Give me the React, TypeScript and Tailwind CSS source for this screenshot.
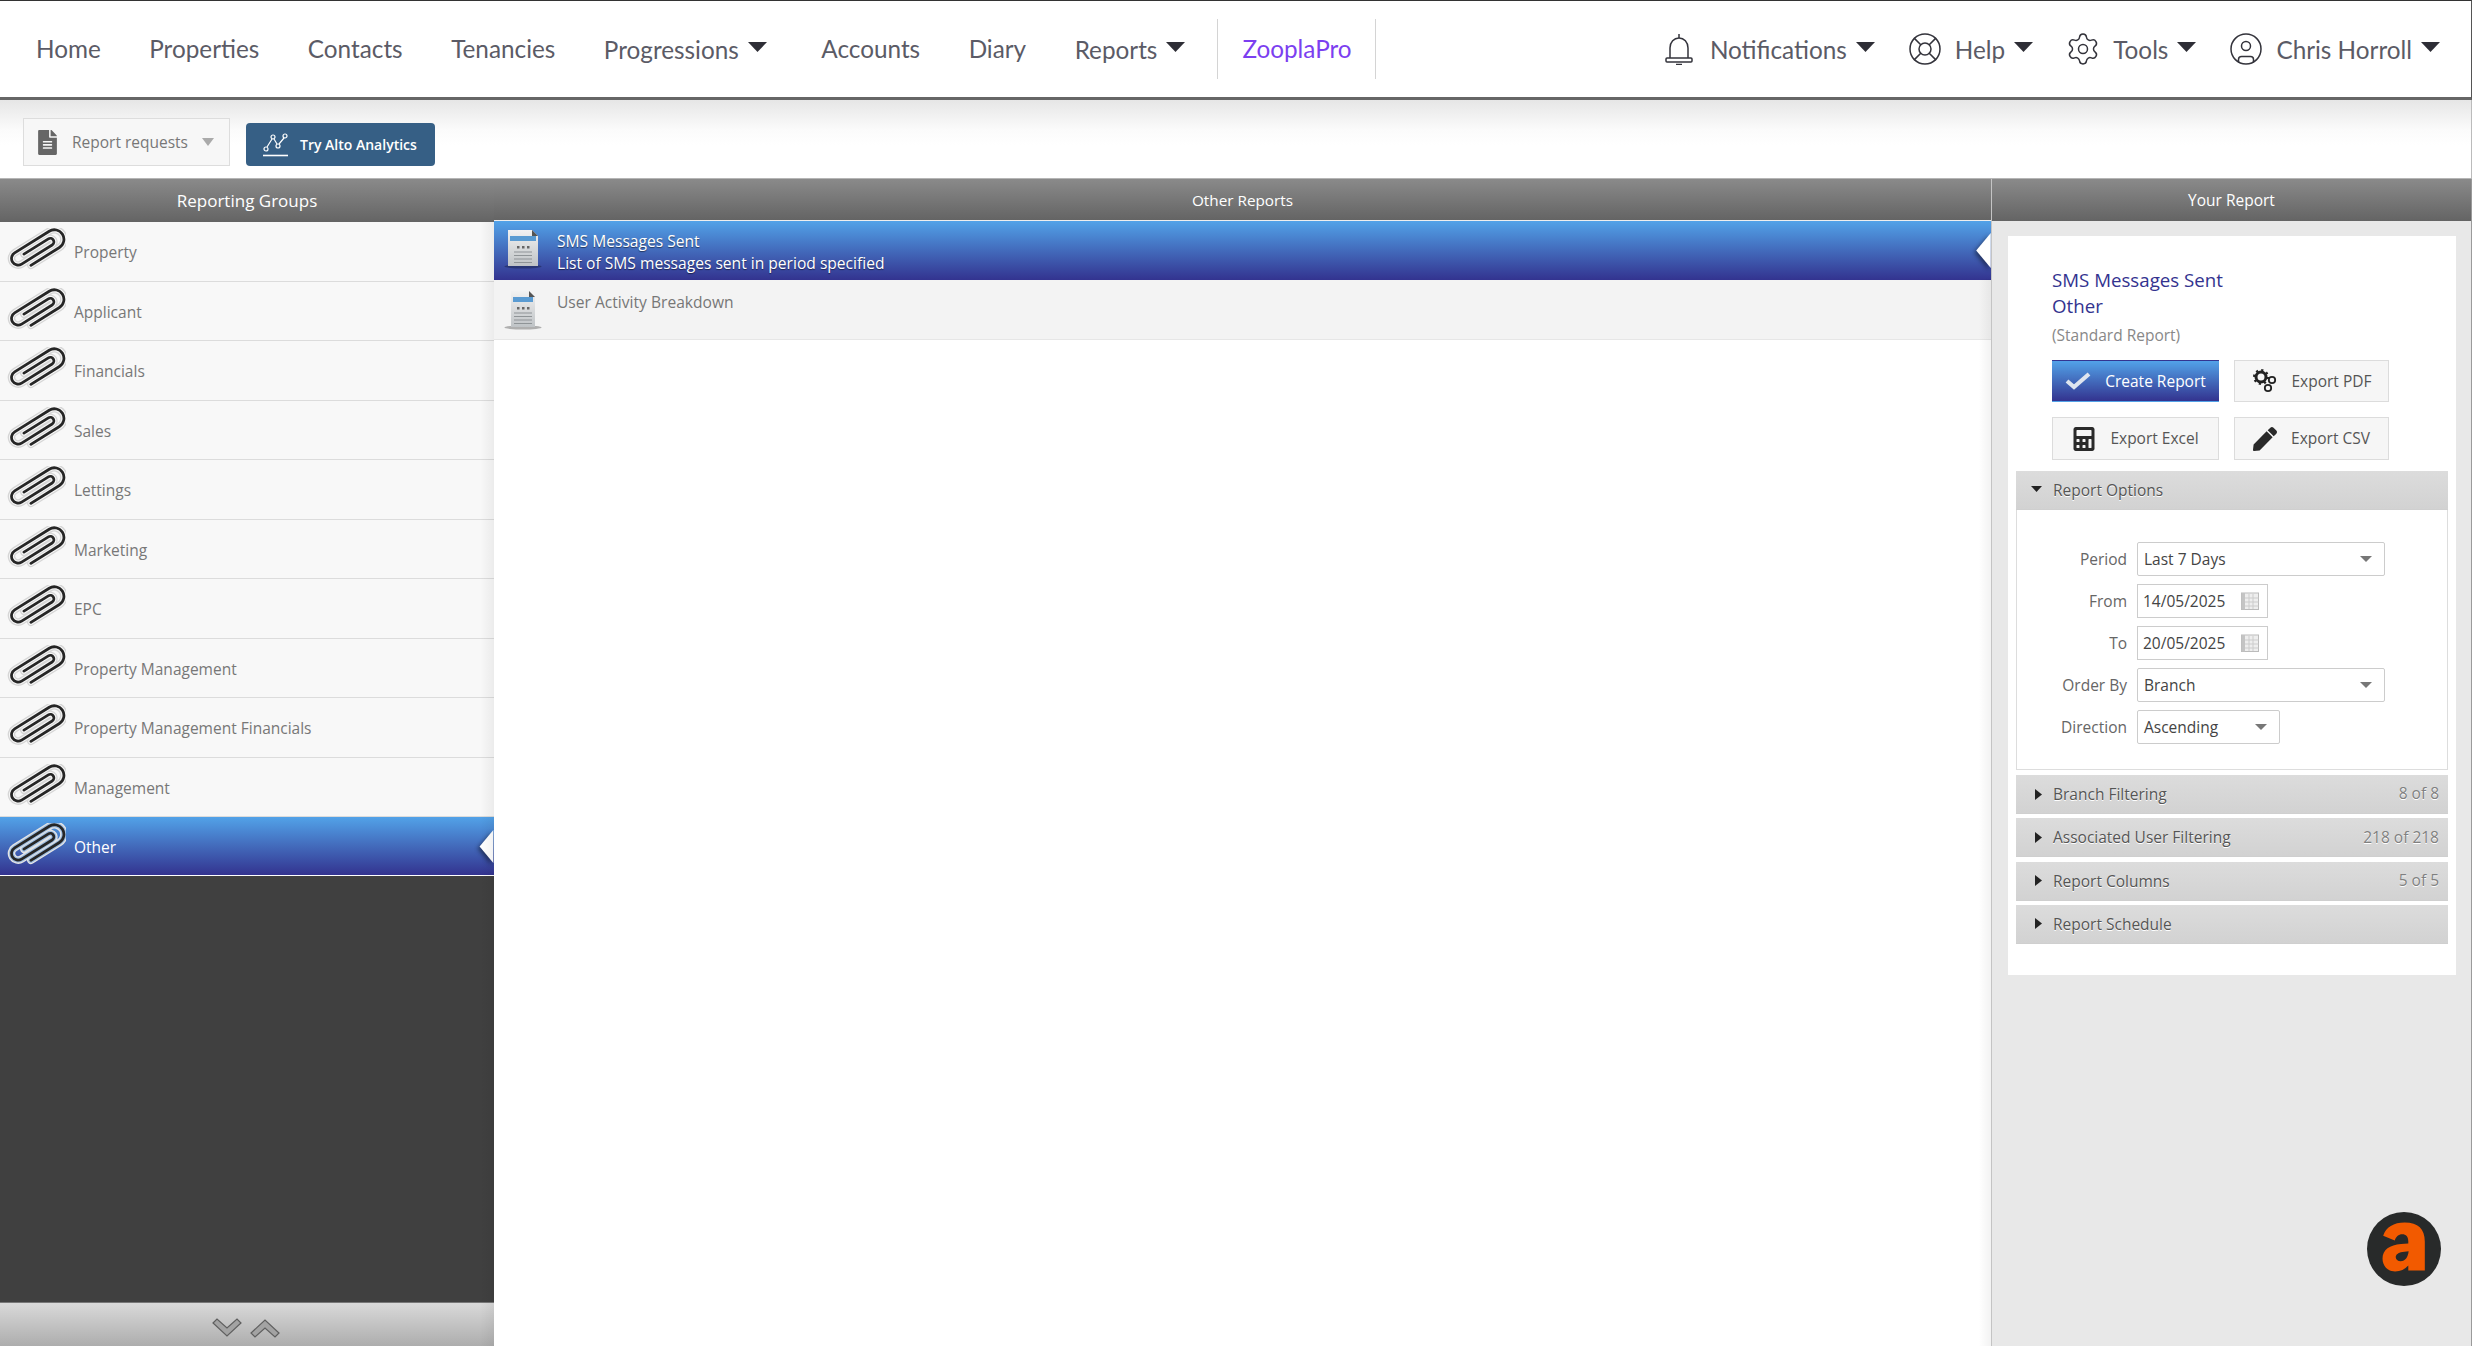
import React from "react";
import { LifeBuoy, Settings, CircleUser } from "lucide-react";
import { FaFileAlt, FaCalculator, FaPen } from "react-icons/fa";

const Caret = () => (
  <svg width="19" height="10" viewBox="0 0 19 10" className="ml-[9px] mt-[-3px] shrink-0">
    <path d="M0 0H19L9.5 10Z" fill="#2e2e36" />
  </svg>
);

const NavItem = ({ label, caret, className = "" }: { label: string; caret?: boolean; className?: string }) => (
  <div className={`flex items-center text-[24.3px] leading-none text-[#5b5b66] ${className}`}>
    <span className={caret ? "mt-[2px]" : ""}>{label}</span>
    {caret && <Caret />}
  </div>
);

const Bell = () => (
  <svg width="30" height="32" viewBox="0 0 30 32" fill="none" stroke="#33333b" strokeWidth="1.5" className="shrink-0">
    <path d="M15 1V5" />
    <path d="M6 25V15C6 9 10 5 15 5C20 5 24 9 24 15V25" />
    <rect x="2" y="25" width="26" height="4" rx="1" />
    <path d="M12 31.5H18" />
  </svg>
);

const Paperclip = ({ active }: { active?: boolean }) => {
  const d = "M14 18H42A8 8 0 0 0 42 2H8A5.5 5.5 0 0 0 8 13H38A3 3 0 0 0 38 7H14";
  return (
    <svg width="60" height="46" viewBox="-1 -9 50 38.3" className="shrink-0">
      <g transform="rotate(-32 24 10)" fill="none" strokeLinecap="round">
        <path d={d} stroke={active ? "#e4e4e4" : "#d6d6d6"} strokeWidth="6.4" />
        <path d={d} stroke={active ? "#9dbce0" : "#f6f6f6"} strokeWidth="4.2" />
        <path d={d} stroke="#262626" strokeWidth="2.3" />
      </g>
    </svg>
  );
};

const ReportIcon = ({ w = 30, id }: { w?: number; id: string }) => (
  <svg width="38" height="40" viewBox="0 0 38 40" className="shrink-0">
    <defs>
      <linearGradient id={id} x1="0" y1="0" x2="0" y2="1">
        <stop offset="0" stopColor="#f2f2f2" />
        <stop offset="1" stopColor="#bfc3c6" />
      </linearGradient>
    </defs>
    <ellipse cx="19" cy="37.5" rx="18.5" ry="2" fill="#000" fillOpacity="0.28" />
    <path d={`M${19 - w / 2} 1H${19 + w / 2 - 6}L${19 + w / 2} 7V37H${19 - w / 2}Z`} fill={`url(#${id})`} />
    <path d={`M${19 + w / 2 - 6} 1L${19 + w / 2} 7H${19 + w / 2 - 6}Z`} fill="#555" />
    <rect x={19 - w / 2 + 2} y="7" width={w - 4} height="5" fill="#5a9bd2" />
    <path d="M13 17h2.5v2.5H13zM18 17h2.5v2.5H18zM23 17h2.5v2.5H23z" fill="#666" />
    <path d="M10 23H28M10 26.5H28M10 30H28M10 33.5H28" stroke="#8f9497" strokeWidth="1.2" />
  </svg>
);

const Notch = ({ top, h }: { top: string; h: string }) => (
  <svg width="16" height="36" viewBox="0 0 16 36" className={`absolute right-0 ${top} ${h} drop-shadow-[-2px_2px_2px_rgba(0,0,0,0.45)]`}>
    <path d="M16 0V36L1 18Z" fill="#fff" />
  </svg>
);

const groups = [
  "Property",
  "Applicant",
  "Financials",
  "Sales",
  "Lettings",
  "Marketing",
  "EPC",
  "Property Management",
  "Property Management Financials",
  "Management",
];

const ColHeader = ({ children, className = "" }: { children: string; className?: string }) => (
  <div className={`flex items-center justify-center bg-[linear-gradient(#8a8a8a,#646464)] text-white ${className}`}>
    {children}
  </div>
);

const ExportButton = ({ icon, label, w, primary, nudge }: { icon: React.ReactNode; label: string; w: string; primary?: boolean; nudge?: boolean }) => (
  <div
    className={`flex items-center justify-center gap-[14px] border text-[15.5px] ${w} ${
      primary
        ? "border-transparent bg-[linear-gradient(#52a2e8,#33338f)] text-white"
        : "border-[#dcdcdc] bg-[#f6f6f6] text-[#555]"
    }`}
  >
    {icon}
    <span className={nudge ? "mt-[2px]" : ""}>{label}</span>
  </div>
);

const FormRow = ({ label, children }: { label: string; children: React.ReactNode }) => (
  <div className="flex h-[34px] items-center">
    <div className="w-[120px] pr-[10px] pt-[1px] text-right text-[15.5px] text-[#666]">{label}</div>
    {children}
  </div>
);

const SmallCaret = () => (
  <svg width="12" height="6" viewBox="0 0 12 6" className="shrink-0">
    <path d="M0 0H12L6 6Z" fill="#777" />
  </svg>
);

const Select = ({ value, w }: { value: string; w: string }) => (
  <div className={`flex h-[34px] items-center justify-between rounded-[2px] border border-[#ccc] bg-white pl-[6px] pr-[12px] text-[15.5px] text-[#444] ${w}`}>
    <span className="mt-[2px]">{value}</span>
    <SmallCaret />
  </div>
);

const DateField = ({ value }: { value: string }) => (
  <div className="flex h-[34px] w-[131px] items-center justify-between border border-[#ccc] bg-white pl-[5px] pr-[8px] text-[15.5px] text-[#444]">
    <span className="mt-[2px]">{value}</span>
    <svg width="18" height="18" viewBox="0 0 18 18" className="shrink-0">
      <rect x="0.5" y="1" width="17" height="16.5" fill="#eee" stroke="#bbb" />
      <rect x="0.5" y="1" width="3.5" height="16.5" fill="#c4c4c4" />
      <path d="M4 6H17.5M4 10H17.5M4 14H17.5M8 2V17M12 2V17" stroke="#ccc" strokeWidth="1" />
    </svg>
  </div>
);

const AccHeader = ({ label, count, open }: { label: string; count?: string; open?: boolean }) => (
  <div className="flex h-[39px] items-center border-b border-[#cfcfcf] bg-[linear-gradient(#dcdcdc,#d2d2d2)] pl-[19px] pr-[9px] text-[15.5px] text-[#555] [text-shadow:0_1px_0_#fff]">
    <span className="flex w-[18px] items-center">
      {open ? (
        <svg width="11" height="6" viewBox="0 0 11 6" className="mt-[-2px] ml-[-4px]">
          <path d="M0 0H11L5.5 6Z" fill="#222" />
        </svg>
      ) : (
        <svg width="7" height="11" viewBox="0 0 7 11">
          <path d="M0 0L7 5.5L0 11Z" fill="#222" />
        </svg>
      )}
    </span>
    <span className="mt-[1px]">{label}</span>
    {count && <span className="ml-auto text-[#808080]">{count}</span>}
  </div>
);

const Chevron = ({ up }: { up?: boolean }) => (
  <svg width="30" height="20" viewBox="0 0 30 20">
    <g transform={up ? "rotate(180 15 10)" : undefined}>
      <path d="M1 5L5 1L15 10L25 1L29 5L15 18Z" fill="#a3a3a3" stroke="#5f5f5f" strokeWidth="1.2" />
    </g>
  </svg>
);

export default function App() {
  return (
    <div className="flex h-[1346px] w-full flex-col overflow-hidden bg-white font-['Open_Sans',sans-serif]">
      {/* top nav */}
      <header className="flex h-[100px] shrink-0 items-center border-t border-b-[3px] border-r border-t-[#333] border-b-[#666] border-r-[#555] bg-white pl-[36px] pr-[31px] font-['Lato',sans-serif]">
        <nav className="flex items-center gap-[48.5px]">
          <NavItem label="Home" />
          <NavItem label="Properties" />
          <NavItem label="Contacts" />
          <NavItem label="Tenancies" />
          <NavItem label="Progressions" caret />
          <NavItem label="Accounts" className="ml-[6px]" />
          <NavItem label="Diary" />
          <NavItem label="Reports" caret />
        </nav>
        <div className="ml-[32px] flex h-[60px] items-center border-x border-[#d4d4d4] pl-[24px] pr-[23px] text-[24.3px] text-[#7c3ff0]">
          ZooplaPro
        </div>
        <div className="ml-auto flex items-center gap-[32px]">
          <div className="flex items-center gap-[16px]">
            <Bell />
            <NavItem label="Notifications" caret />
          </div>
          <div className="flex items-center gap-[12px]">
            <LifeBuoy size={36} strokeWidth={1} color="#33333b" />
            <NavItem label="Help" caret />
          </div>
          <div className="flex items-center gap-[12px]">
            <Settings size={36} strokeWidth={1} color="#33333b" />
            <NavItem label="Tools" caret />
          </div>
          <div className="flex items-center gap-[12px]">
            <CircleUser size={36} strokeWidth={1} color="#33333b" />
            <NavItem label="Chris Horroll" caret />
          </div>
        </div>
      </header>

      {/* toolbar */}
      <div className="flex h-[78px] shrink-0 items-end gap-[16px] border-r border-r-[#bbb] bg-[linear-gradient(#e6e6e6,#fbfbfb_30px,#fff_45px)] pb-[12px] pl-[23px]">
        <div className="flex h-[48px] w-[207px] items-center border border-[#dddddd] bg-[#f7f7f7] pl-[11px] text-[15.5px] text-[#777]">
          <FaFileAlt size={25} color="#666" className="mr-[12px] shrink-0" />
          <span className="mt-[2px]">Report requests</span>
          <svg width="12" height="8" viewBox="0 0 12 8" className="ml-[14px] shrink-0">
            <path d="M0 0H12L6 8Z" fill="#aaa" />
          </svg>
        </div>
        <div className="flex h-[43px] w-[189px] items-center rounded-[4px] bg-[#365f85] pl-[17px] text-[14px] font-semibold text-white">
          <svg width="26" height="24" viewBox="0 0 26 24" fill="none" stroke="#fff" strokeWidth="1.2" className="mr-[11px] shrink-0">
            <circle cx="3" cy="16" r="2" />
            <circle cx="10" cy="4" r="2" />
            <circle cx="15" cy="13" r="2" />
            <circle cx="22" cy="3" r="2" />
            <path d="M4 14L9 6M11 6L14 11M16 11L21 5" />
            <path d="M0 22.5H25" strokeWidth="1.6" />
          </svg>
          <span>Try Alto Analytics</span>
        </div>
      </div>

      {/* columns */}
      <div className="flex min-h-0 flex-1 border-t border-t-[#b5b5b5]">
        {/* left */}
        <aside className="relative flex w-[494px] shrink-0 flex-col bg-[#404040]">
          <ColHeader className="h-[43px] shrink-0 text-[17px]">Reporting Groups</ColHeader>
          {groups.map((g) => (
            <div
              key={g}
              className="flex h-[59.5px] shrink-0 items-center border-b border-[#dcdcdc] bg-[#f8f8f8] pl-[6px] text-[15.5px] text-[#777]"
            >
              <Paperclip />
              <span className="ml-[8px] mt-[3px]">{g}</span>
            </div>
          ))}
          <div className="relative flex h-[59px] shrink-0 items-center border-b border-white bg-[linear-gradient(#52a2e8,#33338f)] pl-[6px] text-[15.5px] text-white">
            <Paperclip active />
            <span className="ml-[8px] mt-[3px]">Other</span>
            <Notch top="top-[13px]" h="h-[33px]" />
          </div>
          <div className="flex-1" />
          <div className="flex h-[44px] shrink-0 items-start justify-center gap-[8px] border-t border-[#777] bg-[linear-gradient(#d9d9d9,#adadad)] pr-[2px] pt-[15px]">
            <Chevron />
            <Chevron up />
          </div>
          <div className="pointer-events-none absolute bottom-0 right-0 top-[43px] w-[14px] bg-[linear-gradient(90deg,rgba(0,0,0,0),rgba(0,0,0,0.05))]" />
        </aside>

        {/* center */}
        <main className="relative flex w-[1497px] shrink-0 flex-col bg-white">
          <ColHeader className="h-[42px] shrink-0 border-b border-[#eee] pt-[1px] text-[15.3px]">Other Reports</ColHeader>
          <div className="relative flex h-[59px] shrink-0 bg-[linear-gradient(#52a2e8,#33338f)] pl-[10px] pt-[8px] text-[15.6px] leading-[22px] text-white [text-shadow:0_1px_1px_rgba(0,0,0,0.5)]">
            <ReportIcon id="doc-a" />
            <div className="ml-[15px] pt-[1px]">
              <div>SMS Messages Sent</div>
              <div>List of SMS messages sent in period specified</div>
            </div>
            <Notch top="top-[12px]" h="h-[35px]" />
          </div>
          <div className="flex h-[60px] shrink-0 border-b border-b-[#e6e6e6] bg-[#f3f3f3] pl-[10px] pt-[10px] text-[15.6px] leading-[22px] text-[#777]">
            <ReportIcon id="doc-b" w={24} />
            <div className="ml-[15px] pt-[1px]">User Activity Breakdown</div>
          </div>
          <div className="pointer-events-none absolute bottom-0 right-0 top-[100px] w-[12px] bg-[linear-gradient(90deg,rgba(0,0,0,0),rgba(0,0,0,0.05))]" />
        </main>

        {/* right */}
        <section className="relative flex min-w-0 flex-1 flex-col border-x border-l-[#c4c4c4] border-r-[#9a9a9a] bg-[#e8e8e8]">
          <ColHeader className="h-[42px] shrink-0 pt-[1px] text-[15.5px]">Your Report</ColHeader>
          <div className="ml-[16px] mt-[15px] w-[448px] bg-white px-[8px] pb-[31px] pt-[31px]">
            <div className="pl-[36px]">
              <div className="text-[18.7px] leading-[26px] text-[#33338f]">
                <div>SMS Messages Sent</div>
                <div>Other</div>
              </div>
              <div className="mt-[4px] text-[15.5px] leading-[24px] text-[#888]">(Standard Report)</div>
              <div className="mt-[13px] flex h-[42px] gap-[15px]">
                <ExportButton
                  primary
                  nudge
                  w="w-[167px]"
                  label="Create Report"
                  icon={
                    <svg width="26" height="20" viewBox="0 0 26 20">
                      <path d="M2 10L9 16L24 3" fill="none" stroke="#dfe5ef" strokeWidth="4.2" />
                    </svg>
                  }
                />
                <ExportButton
                  nudge
                  w="w-[155px]"
                  label="Export PDF"
                  icon={
                    <svg width="26" height="24" viewBox="0 0 26 24" fill="none" stroke="#222">
                      <circle cx="9" cy="8" r="5" strokeWidth="3" />
                      <circle cx="9" cy="8" r="7" strokeWidth="2" strokeDasharray="2.2 3.3" />
                      <circle cx="20" cy="11" r="3.2" strokeWidth="1.8" />
                      <circle cx="16" cy="19" r="3.2" strokeWidth="1.8" />
                    </svg>
                  }
                />
              </div>
              <div className="mt-[15px] flex h-[43px] gap-[15px]">
                <ExportButton w="w-[167px]" label="Export Excel" icon={<FaCalculator size={24} color="#2a2a2a" />} />
                <ExportButton w="w-[155px]" label="Export CSV" icon={<FaPen size={24} color="#2a2a2a" />} />
              </div>
            </div>

            <div className="mt-[11px]">
              <AccHeader label="Report Options" open />
              <div className="flex flex-col gap-[8px] border border-t-0 border-[#dddddd] pb-[25px] pt-[32px]">
                <FormRow label="Period">
                  <Select value="Last 7 Days" w="w-[248px]" />
                </FormRow>
                <FormRow label="From">
                  <DateField value="14/05/2025" />
                </FormRow>
                <FormRow label="To">
                  <DateField value="20/05/2025" />
                </FormRow>
                <FormRow label="Order By">
                  <Select value="Branch" w="w-[248px]" />
                </FormRow>
                <FormRow label="Direction">
                  <Select value="Ascending" w="w-[143px]" />
                </FormRow>
              </div>
              <div className="mt-[5px] flex flex-col gap-[4.33px]">
                <AccHeader label="Branch Filtering" count="8 of 8" />
                <AccHeader label="Associated User Filtering" count="218 of 218" />
                <AccHeader label="Report Columns" count="5 of 5" />
                <AccHeader label="Report Schedule" />
              </div>
            </div>
          </div>

          {/* floating logo */}
          <svg width="74" height="74" viewBox="81 66 224 224" className="absolute right-[30px] top-[1033px]">
            <circle cx="193" cy="178" r="112" fill="#282a2a" />
            <path
              fillRule="evenodd"
              fill="#f25a00"
              d="M130 138C138 112 162 98 195 98C236 98 256 118 256 155V243H206V228C196 240 182 246 166 246C143 246 128 229 128 207C128 180 150 166 184 163L206 161V155C206 140 199 133 188 133C176 133 168 141 165 152ZM207 185L188 187C175 189 168 195 168 203C168 210 174 215 183 215C197 215 205 203 207 185Z"
            />
          </svg>
        </section>
      </div>
    </div>
  );
}
